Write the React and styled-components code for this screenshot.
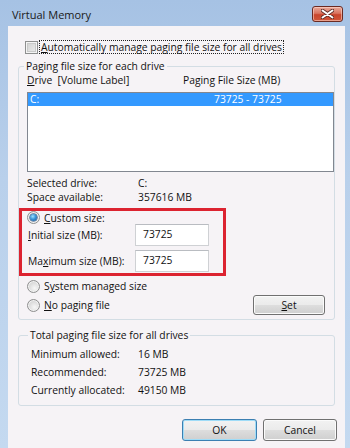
import React from "react";
import styled, { createGlobalStyle, css } from "styled-components";

const Global = createGlobalStyle`
  html, body { margin: 0; padding: 0; }
  body {
    width: 350px; height: 448px; overflow: hidden;
    font-family: "Open Sans", "Noto Sans", sans-serif;
    font-size: 10.3px;
    color: #111;
  }
  * { box-sizing: border-box; }
  u { text-decoration: underline; text-underline-offset: 1px; }
`;

const Window = styled.div`
  width: 350px;
  height: 448px;
  display: flex;
  flex-direction: column;
  background: linear-gradient(180deg, #a6c2e4 0%, #b9d0eb 40%, #c4d9f0 100%);
`;

const TitleBar = styled.div`
  height: 26px;
  flex: none;
  display: flex;
  align-items: flex-start;
  justify-content: space-between;
  padding: 0 7px 0 12px;
`;

const Title = styled.div`
  margin-top: 8px;
  line-height: 14px;
  font-size: 11px;
  color: #1a1a1a;
`;

const CloseButton = styled.div`
  margin-top: 6px;
  width: 31px;
  height: 16px;
  border: 1px solid #6b2a22;
  border-radius: 3px;
  background: linear-gradient(180deg, #e9a99b 0%, #d9745f 45%, #c9452c 55%, #d0563a 100%);
  box-shadow: inset 0 0 0 1px rgba(255, 220, 210, 0.55);
  display: flex;
  align-items: center;
  justify-content: center;
`;

const Content = styled.div`
  flex: 1;
  margin: 0 5px 0 8px;
  background: #f6f3f6;
  display: flex;
  flex-direction: column;
  padding-top: 14px;
`;

const CheckRow = styled.label`
  display: flex;
  align-items: center;
  height: 14px;
  margin-left: 17px;
  gap: 2px;
`;

const CheckBox = styled.span`
  width: 13px;
  height: 13px;
  flex: none;
  border: 1px solid #8e8f8f;
  background: linear-gradient(135deg, #cfcfcf 0%, #eeeeee 100%);
  box-shadow: inset 0 0 0 1px #f4f4f4, inset 0 0 0 2px #c9c9c9;
`;

const FocusText = styled.span`
  line-height: 12px;
  padding: 0 1px;
  outline: 1px dotted #222;
  outline-offset: 0;
`;

const Group = styled.fieldset`
  margin: ${(p) => p.$top}px 0 0 10px;
  width: 317px;
  border: 1px solid #d3dde4;
  border-radius: 3px;
  padding: ${(p) => p.$pad};
  min-width: 0;
`;

const Legend = styled.legend`
  line-height: 14px;
  padding: 0 2px;
  margin-left: ${(p) => p.$offset}px;
`;

const HeaderRow = styled.div`
  display: grid;
  grid-template-columns: 156px 1fr;
  line-height: 14px;
`;

const ListBox = styled.div`
  margin-top: 5px;
  height: 80px;
  border: 1px solid #828790;
  background: #fff;
  padding: 0;
`;

const ListItem = styled.div`
  height: 13px;
  margin: 0;
  display: grid;
  grid-template-columns: 184px 1fr;
  padding-left: 2px;
  line-height: 13px;
  background: ${(p) => (p.$selected ? "#3399ff" : "transparent")};
  color: ${(p) => (p.$selected ? "#fff" : "#111")};
`;

const InfoGrid = styled.div`
  display: grid;
  grid-template-columns: ${(p) => p.$col}px 1fr;
  grid-auto-rows: ${(p) => p.$row}px;
  align-items: center;
  margin-top: ${(p) => p.$top || 0}px;
  padding-left: ${(p) => p.$left || 0}px;
`;

const Highlight = styled.div`
  margin: 4px 0 0 -8px;
  width: 207px;
  border: 3px solid #dc2330;
  padding: 0 0 1px 0;
  display: flex;
  flex-direction: column;
`;

const RadioRow = styled.label`
  display: flex;
  align-items: center;
  gap: 4px;
  height: ${(p) => p.$h || 14}px;
  padding-left: ${(p) => p.$left || 0}px;
  margin-top: ${(p) => p.$top || 0}px;
`;

const Radio = styled.span`
  width: 13px;
  height: 13px;
  flex: none;
  border-radius: 50%;
  border: 1px solid #8e8f8f;
  background: radial-gradient(circle at 60% 65%, #f7f7f7 0%, #dcdcdc 55%, #cdcdcd 100%);
  box-shadow: inset 0 0 0 1px #f2f2f2;
  display: flex;
  align-items: center;
  justify-content: center;
  ${(p) =>
    p.$checked &&
    css`
      &::after {
        content: "";
        width: 7px;
        height: 7px;
        border-radius: 50%;
        background: radial-gradient(circle at 40% 35%, #9ee4ff 0%, #3a93d6 45%, #174f8f 100%);
        box-shadow: 0 0 0 0.5px #1c3f70;
      }
    `}
`;

const FieldRow = styled.div`
  display: grid;
  grid-template-columns: 107px 74px;
  align-items: center;
  padding-left: 6px;
  margin-top: ${(p) => p.$top}px;
`;

const TextBox = styled.div`
  height: 22px;
  border: 1px solid #cfd1d4;
  border-top-color: #b9bcc1;
  background: #fff;
  padding: 2px 0 0 7px;
  line-height: 14px;
`;

const BottomRow = styled.div`
  display: flex;
  align-items: center;
  justify-content: space-between;
  margin-top: 2px;
  padding-right: 9px;
  height: 20px;
`;

const Button = styled.div`
  width: ${(p) => p.$w}px;
  height: ${(p) => p.$h}px;
  border: 1px solid ${(p) => (p.$default ? "#3c7fb1" : "#707070")};
  border-radius: 3px;
  background: linear-gradient(180deg, #f2f2f2 0%, #ebebeb 48%, #dddddd 52%, #cfcfcf 100%);
  box-shadow: inset 0 0 0 1px ${(p) => (p.$default ? "#9fdcf7" : "#fbfbfb")};
  display: flex;
  align-items: center;
  justify-content: center;
  line-height: 14px;
`;

const ButtonBar = styled.div`
  display: flex;
  justify-content: flex-end;
  gap: 6px;
  margin-top: 13px;
  padding-right: 8px;
`;

export default function App() {
  return (
    <>
      <Global />
      <Window>
        <TitleBar>
          <Title>Virtual Memory</Title>
          <CloseButton>
            <svg width="13" height="10" viewBox="0 0 13 10">
              <path
                d="M1.5 1.5 L11.5 8.5 M11.5 1.5 L1.5 8.5"
                stroke="#5a2a24"
                strokeWidth="3.6"
                strokeLinecap="round"
              />
              <path
                d="M1.5 1.5 L11.5 8.5 M11.5 1.5 L1.5 8.5"
                stroke="#ffffff"
                strokeWidth="2"
                strokeLinecap="round"
              />
            </svg>
          </CloseButton>
        </TitleBar>
        <Content>
          <CheckRow>
            <CheckBox />
            <FocusText>
              <u>A</u>utomatically manage paging file size for all drives
            </FocusText>
          </CheckRow>

          <Group $top={5} $pad="0 0 4px 8px">
            <Legend $offset={-3}>Paging file size for each drive</Legend>
            <HeaderRow>
              <span>
                <u>D</u>rive&nbsp;&nbsp;[Volume Label]
              </span>
              <span>Paging File Size (MB)</span>
            </HeaderRow>
            <ListBox>
              <ListItem $selected>
                <span>C:</span>
                <span>73725 - 73725</span>
              </ListItem>
            </ListBox>
            <InfoGrid $col={111} $row={14} $top={4}>
              <span>Selected drive:</span>
              <span>C:</span>
              <span>Space available:</span>
              <span>357616 MB</span>
            </InfoGrid>
            <Highlight>
              <RadioRow $left={5} $h={13}>
                <Radio $checked />
                <span>
                  <u>C</u>ustom size:
                </span>
              </RadioRow>
              <FieldRow $top={0}>
                <span>
                  <u>I</u>nitial size (MB):
                </span>
                <TextBox>73725</TextBox>
              </FieldRow>
              <FieldRow $top={4}>
                <span>
                  Ma<u>x</u>imum size (MB):
                </span>
                <TextBox>73725</TextBox>
              </FieldRow>
            </Highlight>
            <RadioRow $top={3}>
              <Radio />
              <span>
                S<u>y</u>stem managed size
              </span>
            </RadioRow>
            <BottomRow>
              <RadioRow>
                <Radio />
                <span>
                  <u>N</u>o paging file
                </span>
              </RadioRow>
              <Button $w={72} $h={20}>
                <span>
                  <u>S</u>et
                </span>
              </Button>
            </BottomRow>
          </Group>

          <Group $top={8} $pad="3px 0 6px 12px">
            <Legend $offset={-3}>Total paging file size for all drives</Legend>
            <InfoGrid $col={107} $row={18}>
              <span>Minimum allowed:</span>
              <span>16 MB</span>
              <span>Recommended:</span>
              <span>73725 MB</span>
              <span>Currently allocated:</span>
              <span>49150 MB</span>
            </InfoGrid>
          </Group>

          <ButtonBar>
            <Button $w={75} $h={22} $default>
              OK
            </Button>
            <Button $w={74} $h={22}>
              Cancel
            </Button>
          </ButtonBar>
        </Content>
      </Window>
    </>
  );
}
